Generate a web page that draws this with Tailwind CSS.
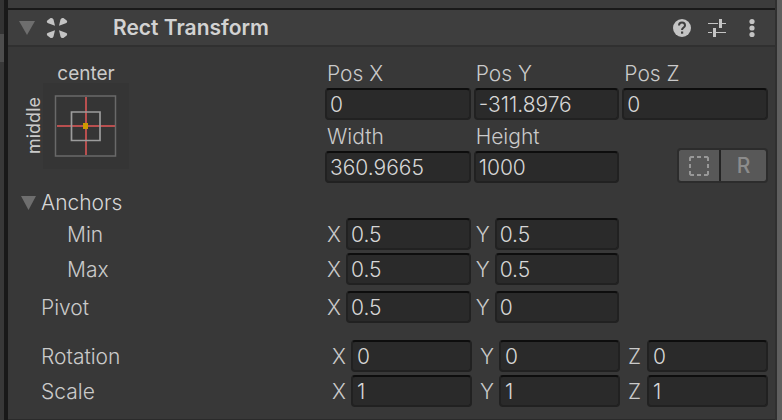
<!DOCTYPE html>
<html lang="en">
<head>
    <meta charset="UTF-8" />
    <meta name="viewport" content="width=device-width, initial-scale=1.0"/>
    <title>Rect Transform</title>
    <script src="https://cdn.jsdelivr.net/npm/@tailwindcss/browser@4"></script>
</head>
<body class="min-h-screen flex bg-[#383838] font-['Inter','Liberation_Sans',sans-serif] text-[21px] leading-6 font-light text-[#cacaca]">
    <!-- Neighbouring panel edge -->
    <div class="w-1 shrink-0 flex flex-col">
        <div class="h-[34px] bg-[#333333]"></div>
        <div class="h-7 bg-[#4d4d4d]"></div>
        <div class="flex-1 bg-[#383838]"></div>
    </div>
    <div class="w-1 shrink-0 bg-[#191919]"></div>

    <main class="flex-1 min-w-0 border-b border-[#2b2b2b]">
        <div class="h-2 bg-[#3c3c3c]"></div>

        <header class="h-[39px] flex items-center border-t-2 border-t-[#1a1a1a] border-b-2 border-b-[#303030] bg-[#3e3e3e] pl-[11px] pr-[13px]">
            <button type="button" aria-label="Collapse component">
                <svg class="block" width="16" height="14" viewBox="0 0 16 14"><path d="M0 0h16L8 14z" fill="#6e6e6e"/></svg>
            </button>
            <svg class="ml-[11px]" width="22" height="22" viewBox="0 0 22 22" fill="#c4c4c4">
                <path id="petal" d="M9 8.800 7.500 2.600Q6.800.5 4.600 1.100L1.300 3.600Q0 5.400 2.200 6.200z"/>
                <use href="#petal" transform="matrix(-1 0 0 1 22 0)"/>
                <use href="#petal" transform="matrix(1 0 0 -1 0 22)"/>
                <use href="#petal" transform="rotate(180 11 11)"/>
            </svg>
            <h1 class="ml-[45px] flex-1 text-[21px] font-semibold text-[#d2d2d2]">Rect Transform</h1>
            <div class="flex items-center gap-4">
                <button type="button" aria-label="Help">
                    <svg class="block" width="20" height="20" viewBox="0 0 20 20" fill="none">
                        <circle cx="10" cy="10" r="9" fill="#c4c4c4"/>
                        <path d="M7 7.500C7 3.500 13 3.500 13 7.500 13 9.500 10 9.500 10 12" stroke="#3e3e3e" stroke-width="2"/>
                        <path d="M9 13.500h2.200v2.200H9z" fill="#3e3e3e"/>
                    </svg>
                </button>
                <button type="button" aria-label="Presets">
                    <svg class="block" width="18" height="20" viewBox="0 0 18 20" fill="#c4c4c4">
                        <path d="M0 5h10v1H0zM14 5h4v1h-4zM11 1h3v9h-3zM0 14h4v1H0zM8 14h10v1H8zM5 10h3v9H5z"/>
                    </svg>
                </button>
                <button type="button" aria-label="More options" class="px-1.5">
                    <svg class="block" width="8" height="20" viewBox="0 0 8 20" fill="#c4c4c4">
                        <circle cx="4" cy="3.500" r="2.600"/><circle cx="4" cy="10" r="2.600"/><circle cx="4" cy="16.500" r="2.600"/>
                    </svg>
                </button>
            </div>
        </header>

        <div class="pt-[10px] pr-[7px]">
            <section class="flex">
                <div class="w-[317px] shrink-0 grid grid-cols-[18px_86px] grid-rows-[26px_86px] pl-[17px] text-lg leading-none font-normal">
                    <span class="col-start-2 pt-[7px] text-center text-[19px]">center</span>
                    <span class="row-start-2 self-center justify-self-center rotate-180 [writing-mode:vertical-rl]">middle</span>
                    <button type="button" aria-label="Anchor presets" class="row-start-2 col-start-2 bg-[#353535]">
                        <svg class="block" width="86" height="86" viewBox="0 0 86 86" fill="none">
                            <path d="M12.500 13h60v60h-60z" stroke="#696969" stroke-width="1.500"/>
                            <path d="M14 43h58M43 14v58" stroke="#b94f4f" stroke-width="2"/>
                            <path d="M28.500 29h28.500v28.500H28.500z" stroke="#9c9c9c" stroke-width="1.700"/>
                            <path d="M40 40h5v6h-5z" fill="#cc9a00"/>
                        </svg>
                    </button>
                </div>
                <div class="flex-1 grid grid-cols-3 gap-x-[3px]">
                    <div>
                        <label for="posX" class="block h-[31px] pt-[5px] pl-0.5">Pos X</label>
                        <input id="posX" type="text" value="0" class="block w-full h-8 px-[3px] rounded border-2 border-[#212121] border-t-[#0d0d0d] bg-[#2a2a2a] text-[#d6d6d6] outline-none">
                    </div>
                    <div>
                        <label for="posY" class="block h-[31px] pt-[5px] pl-0.5">Pos Y</label>
                        <input id="posY" type="text" value="-311.8976" class="block w-full h-8 px-[3px] rounded border-2 border-[#212121] border-t-[#0d0d0d] bg-[#2a2a2a] text-[#d6d6d6] outline-none">
                    </div>
                    <div>
                        <label for="posZ" class="block h-[31px] pt-[5px] pl-0.5">Pos Z</label>
                        <input id="posZ" type="text" value="0" class="block w-full h-8 px-[3px] rounded border-2 border-[#212121] border-t-[#0d0d0d] bg-[#2a2a2a] text-[#d6d6d6] outline-none">
                    </div>
                    <div>
                        <label for="width" class="block h-[31px] pt-[5px] pl-0.5">Width</label>
                        <input id="width" type="text" value="360.9665" class="block w-full h-8 px-[3px] rounded border-2 border-[#212121] border-t-[#0d0d0d] bg-[#2a2a2a] text-[#d6d6d6] outline-none">
                    </div>
                    <div>
                        <label for="height" class="block h-[31px] pt-[5px] pl-0.5">Height</label>
                        <input id="height" type="text" value="1000" class="block w-full h-8 px-[3px] rounded border-2 border-[#212121] border-t-[#0d0d0d] bg-[#2a2a2a] text-[#d6d6d6] outline-none">
                    </div>
                    <div class="flex items-end justify-end">
                        <div class="flex gap-0.5 h-[35px] rounded border-2 border-[#2c2c2c] bg-[#242424] overflow-hidden">
                            <button type="button" aria-label="Blueprint mode" class="w-10 flex items-center justify-center bg-[#585858]">
                                <svg width="20" height="20" viewBox="0 0 20 20" fill="none" stroke="#989898" stroke-width="2">
                                    <path d="M1 5V2L2 1h3M8 1h4M15 1h3l1 1v3M19 8v4M19 15v3l-1 1h-3M12 19H8M5 19H2l-1-1v-3M1 12V8"/>
                                </svg>
                            </button>
                            <button type="button" aria-label="Raw edit mode" class="w-[45px] bg-[#585858] font-medium text-[#8c8c8c]">R</button>
                        </div>
                    </div>
                </div>
            </section>

            <div class="mt-1 h-[31px] flex items-center pl-[13px] text-[#d6d6d6]">
                <button type="button" aria-label="Collapse anchors">
                    <svg class="block" width="15" height="14" viewBox="0 0 15 14"><path d="M0 0h15L7.500 14z" fill="#6e6e6e"/></svg>
                </button>
                <span class="ml-[5px]">Anchors</span>
            </div>

            <div class="flex flex-col gap-[3px]">
                <div class="flex items-center">
                    <span class="w-[317px] shrink-0 pt-0.5 pl-[59px]">Min</span>
                    <div class="flex-1 grid grid-cols-3 gap-x-[3px]">
                        <div class="flex items-center">
                            <label for="minX" class="w-[21px] shrink-0 pt-0.5 pl-0.5">X</label>
                            <input id="minX" type="text" value="0.5" class="flex-1 min-w-0 h-8 px-[3px] rounded border-2 border-[#212121] border-t-[#0d0d0d] bg-[#2a2a2a] text-[#d6d6d6] outline-none">
                        </div>
                        <div class="flex items-center">
                            <label for="minY" class="w-[21px] shrink-0 pt-0.5 pl-0.5">Y</label>
                            <input id="minY" type="text" value="0.5" class="flex-1 min-w-0 h-8 px-[3px] rounded border-2 border-[#212121] border-t-[#0d0d0d] bg-[#2a2a2a] text-[#d6d6d6] outline-none">
                        </div>
                    </div>
                </div>
                <div class="flex items-center">
                    <span class="w-[317px] shrink-0 pt-0.5 pl-[59px]">Max</span>
                    <div class="flex-1 grid grid-cols-3 gap-x-[3px]">
                        <div class="flex items-center">
                            <label for="maxX" class="w-[21px] shrink-0 pt-0.5 pl-0.5">X</label>
                            <input id="maxX" type="text" value="0.5" class="flex-1 min-w-0 h-8 px-[3px] rounded border-2 border-[#212121] border-t-[#0d0d0d] bg-[#2a2a2a] text-[#d6d6d6] outline-none">
                        </div>
                        <div class="flex items-center">
                            <label for="maxY" class="w-[21px] shrink-0 pt-0.5 pl-0.5">Y</label>
                            <input id="maxY" type="text" value="0.5" class="flex-1 min-w-0 h-8 px-[3px] rounded border-2 border-[#212121] border-t-[#0d0d0d] bg-[#2a2a2a] text-[#d6d6d6] outline-none">
                        </div>
                    </div>
                </div>
            </div>

            <div class="mt-1.5 flex items-center">
                <span class="w-[317px] shrink-0 pt-0.5 pl-[33px]">Pivot</span>
                <div class="flex-1 grid grid-cols-3 gap-x-[3px]">
                    <div class="flex items-center">
                        <label for="pivotX" class="w-[21px] shrink-0 pt-0.5 pl-0.5">X</label>
                        <input id="pivotX" type="text" value="0.5" class="flex-1 min-w-0 h-8 px-[3px] rounded border-2 border-[#212121] border-t-[#0d0d0d] bg-[#2a2a2a] text-[#d6d6d6] outline-none">
                    </div>
                    <div class="flex items-center">
                        <label for="pivotY" class="w-[21px] shrink-0 pt-0.5 pl-0.5">Y</label>
                        <input id="pivotY" type="text" value="0" class="flex-1 min-w-0 h-8 px-[3px] rounded border-2 border-[#212121] border-t-[#0d0d0d] bg-[#2a2a2a] text-[#d6d6d6] outline-none">
                    </div>
                </div>
            </div>

            <div class="mt-[17px] flex flex-col gap-[3px]">
                <div class="flex items-center">
                    <span class="w-[322px] shrink-0 pt-0.5 pl-[33px]">Rotation</span>
                    <div class="flex-1 grid grid-cols-3 gap-x-1.5">
                        <div class="flex items-center">
                            <label for="rotX" class="w-[21px] shrink-0 pt-0.5 pl-0.5">X</label>
                            <input id="rotX" type="text" value="0" class="flex-1 min-w-0 h-8 px-1 rounded border-2 border-[#212121] border-t-[#0d0d0d] bg-[#2a2a2a] text-[#d6d6d6] outline-none">
                        </div>
                        <div class="flex items-center">
                            <label for="rotY" class="w-[21px] shrink-0 pt-0.5 pl-0.5">Y</label>
                            <input id="rotY" type="text" value="0" class="flex-1 min-w-0 h-8 px-1 rounded border-2 border-[#212121] border-t-[#0d0d0d] bg-[#2a2a2a] text-[#d6d6d6] outline-none">
                        </div>
                        <div class="flex items-center">
                            <label for="rotZ" class="w-[21px] shrink-0 pt-0.5 pl-0.5">Z</label>
                            <input id="rotZ" type="text" value="0" class="flex-1 min-w-0 h-8 px-1 rounded border-2 border-[#212121] border-t-[#0d0d0d] bg-[#2a2a2a] text-[#d6d6d6] outline-none">
                        </div>
                    </div>
                </div>
                <div class="flex items-center">
                    <span class="w-[322px] shrink-0 pt-0.5 pl-[33px]">Scale</span>
                    <div class="flex-1 grid grid-cols-3 gap-x-1.5">
                        <div class="flex items-center">
                            <label for="scaleX" class="w-[21px] shrink-0 pt-0.5 pl-0.5">X</label>
                            <input id="scaleX" type="text" value="1" class="flex-1 min-w-0 h-8 px-1 rounded border-2 border-[#212121] border-t-[#0d0d0d] bg-[#2a2a2a] text-[#d6d6d6] outline-none">
                        </div>
                        <div class="flex items-center">
                            <label for="scaleY" class="w-[21px] shrink-0 pt-0.5 pl-0.5">Y</label>
                            <input id="scaleY" type="text" value="1" class="flex-1 min-w-0 h-8 px-1 rounded border-2 border-[#212121] border-t-[#0d0d0d] bg-[#2a2a2a] text-[#d6d6d6] outline-none">
                        </div>
                        <div class="flex items-center">
                            <label for="scaleZ" class="w-[21px] shrink-0 pt-0.5 pl-0.5">Z</label>
                            <input id="scaleZ" type="text" value="1" class="flex-1 min-w-0 h-8 px-1 rounded border-2 border-[#212121] border-t-[#0d0d0d] bg-[#2a2a2a] text-[#d6d6d6] outline-none">
                        </div>
                    </div>
                </div>
            </div>
        </div>
    </main>

    <!-- Scrollbar -->
    <div class="w-[7px] shrink-0 border-l-2 border-[#303030] bg-[#5f5f5f]"></div>
</body>
</html>
